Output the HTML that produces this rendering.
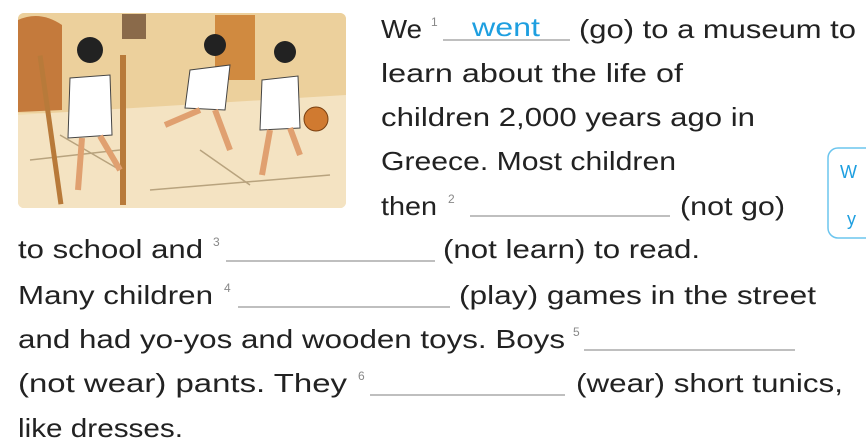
<!DOCTYPE html>
<html><head><meta charset="utf-8"><style>
html,body{margin:0;padding:0;background:#fff;width:866px;height:443px;overflow:hidden}
svg{display:block}
text{font-family:"Liberation Sans",sans-serif;font-size:26px;fill:#222}
.s{font-size:12px;fill:#888}
.b{fill:#1e9fe0}
</style></head><body>
<svg width="866" height="443" viewBox="0 0 866 443">
<defs><clipPath id="c"><rect x="18" y="13" width="328" height="195" rx="6"/></clipPath></defs>
<g clip-path="url(#c)">
<rect x="18" y="13" width="328" height="195" fill="#f1dcae"/>
<rect x="18" y="13" width="328" height="100" fill="#ecd09c"/>
<path d="M18 115 L346 95 L346 208 L18 208Z" fill="#f4e3c2"/>
<path d="M18 20 Q40 10 62 25 L62 110 L18 112Z" fill="#c47a3c"/>
<rect x="215" y="15" width="40" height="65" fill="#d08a40"/>
<rect x="122" y="14" width="24" height="25" fill="#8a6a4a"/>
<path d="M30 160 L120 150 M150 190 L330 175 M200 150 L250 185 M60 135 L120 170" stroke="#b8a37e" stroke-width="1.5" fill="none"/>
<rect x="48" y="55" width="5" height="150" fill="#b87a3a" transform="rotate(-8 50 130)"/>
<rect x="120" y="55" width="6" height="150" fill="#b87a3a"/>
<circle cx="90" cy="50" r="13" fill="#222"/>
<path d="M70 78 L110 75 L112 135 L68 138Z" fill="#fff" stroke="#444"/>
<path d="M82 138 L78 190 M100 136 L120 170" stroke="#e0a070" stroke-width="6"/>
<circle cx="215" cy="45" r="11" fill="#222"/>
<path d="M190 70 L230 65 L225 110 L185 108Z" fill="#fff" stroke="#444"/>
<path d="M200 110 L165 125 M215 110 L230 150" stroke="#e0a070" stroke-width="6"/>
<circle cx="285" cy="52" r="11" fill="#222"/>
<path d="M262 80 L298 76 L300 128 L260 130Z" fill="#fff" stroke="#444"/>
<path d="M270 130 L262 175 M290 128 L300 155" stroke="#e0a070" stroke-width="6"/>
<circle cx="316" cy="119" r="12" fill="#d07a30" stroke="#7a4010"/>
</g>
<rect x="828" y="148" width="56" height="90" rx="10" fill="none" stroke="#6cc5ee" stroke-width="1.5"/>
<text x="840" y="178" class="b" style="font-size:18px">W</text>
<text x="847" y="225" class="b" style="font-size:18px">y</text>

<g stroke="#999" stroke-width="1.2">
<line x1="443" y1="40" x2="570" y2="40"/>
<line x1="470" y1="216" x2="670" y2="216"/>
<line x1="226" y1="261" x2="435" y2="261"/>
<line x1="238" y1="307" x2="450" y2="307"/>
<line x1="584" y1="350" x2="795" y2="350"/>
<line x1="370" y1="395" x2="565" y2="395"/>
</g>

<text x="381" y="38" textLength="41" lengthAdjust="spacingAndGlyphs">We</text>
<text x="431" y="26" class="s">1</text>
<text x="472" y="36" class="b" textLength="68" lengthAdjust="spacingAndGlyphs">went</text>
<text x="579" y="38" textLength="277" lengthAdjust="spacingAndGlyphs">(go) to a museum to</text>
<text x="381" y="82" textLength="302" lengthAdjust="spacingAndGlyphs">learn about the life of</text>
<text x="381" y="126" textLength="374" lengthAdjust="spacingAndGlyphs">children 2,000 years ago in</text>
<text x="381" y="170" textLength="295" lengthAdjust="spacingAndGlyphs">Greece. Most children</text>
<text x="381" y="215" textLength="56" lengthAdjust="spacingAndGlyphs">then</text>
<text x="448" y="203" class="s">2</text>
<text x="680" y="215" textLength="105" lengthAdjust="spacingAndGlyphs">(not go)</text>
<text x="18" y="258" textLength="185" lengthAdjust="spacingAndGlyphs">to school and</text>
<text x="213" y="246" class="s">3</text>
<text x="443" y="258" textLength="257" lengthAdjust="spacingAndGlyphs">(not learn) to read.</text>
<text x="18" y="304" textLength="195" lengthAdjust="spacingAndGlyphs">Many children</text>
<text x="224" y="292" class="s">4</text>
<text x="459" y="304" textLength="357" lengthAdjust="spacingAndGlyphs">(play) games in the street</text>
<text x="18" y="348" textLength="547" lengthAdjust="spacingAndGlyphs">and had yo-yos and wooden toys. Boys</text>
<text x="573" y="336" class="s">5</text>
<text x="18" y="392" textLength="329" lengthAdjust="spacingAndGlyphs">(not  wear) pants. They</text>
<text x="358" y="380" class="s">6</text>
<text x="576" y="392" textLength="267" lengthAdjust="spacingAndGlyphs">(wear) short tunics,</text>
<text x="18" y="437" textLength="165" lengthAdjust="spacingAndGlyphs">like dresses.</text>
</svg>
</body></html>
